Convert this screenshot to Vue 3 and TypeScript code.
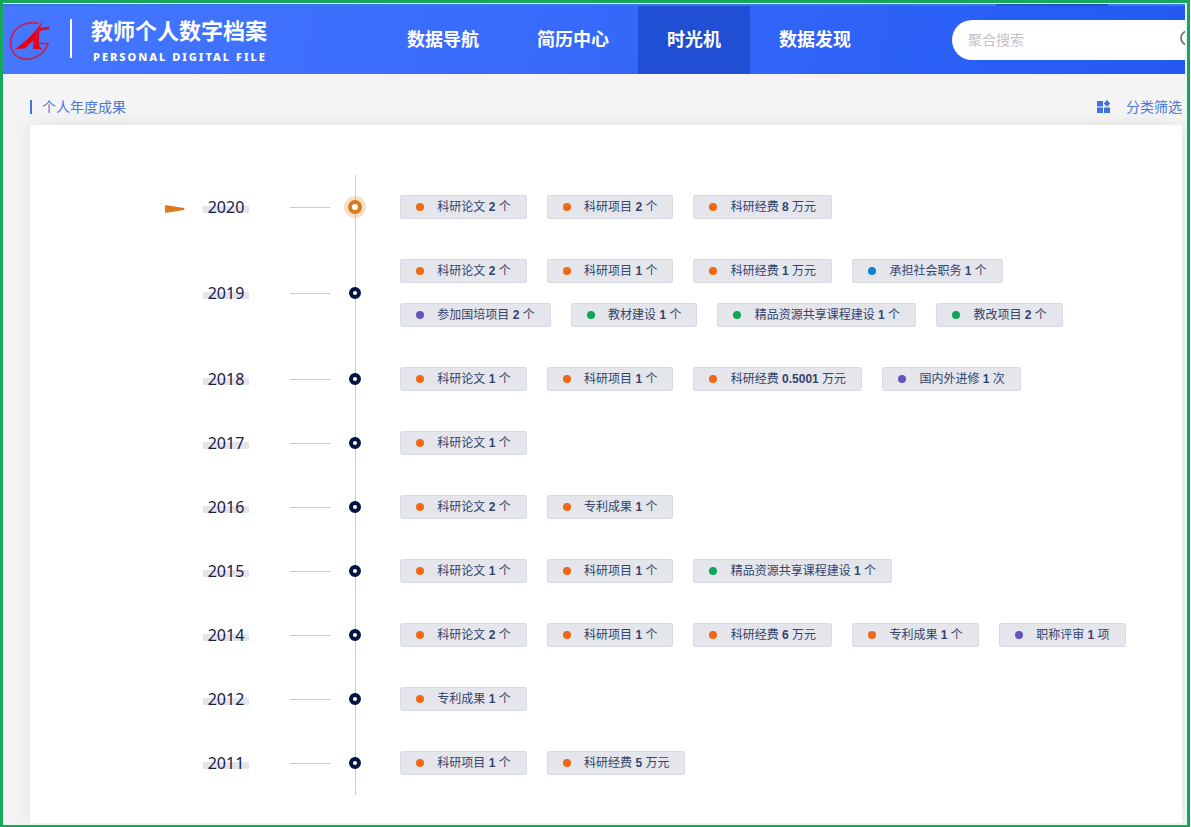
<script setup lang="ts">
import { ref } from 'vue'

type Kind = 'research' | 'social' | 'training' | 'teaching'

interface Tag {
  kind: Kind
  label: string
  value: string
  unit: string
}

interface YearRow {
  year: number
  tags: Tag[]
}

const tag = (kind: Kind, label: string, value: string, unit = '个'): Tag => ({ kind, label, value, unit })

const navItems = ['数据导航', '简历中心', '时光机', '数据发现']
const active = ref('时光机')
const keyword = ref('')

const rows: YearRow[] = [
  {
    year: 2020,
    tags: [
      tag('research', '科研论文', '2'),
      tag('research', '科研项目', '2'),
      tag('research', '科研经费', '8', '万元'),
    ],
  },
  {
    year: 2019,
    tags: [
      tag('research', '科研论文', '2'),
      tag('research', '科研项目', '1'),
      tag('research', '科研经费', '1', '万元'),
      tag('social', '承担社会职务', '1'),
      tag('training', '参加国培项目', '2'),
      tag('teaching', '教材建设', '1'),
      tag('teaching', '精品资源共享课程建设', '1'),
      tag('teaching', '教改项目', '2'),
    ],
  },
  {
    year: 2018,
    tags: [
      tag('research', '科研论文', '1'),
      tag('research', '科研项目', '1'),
      tag('research', '科研经费', '0.5001', '万元'),
      tag('training', '国内外进修', '1', '次'),
    ],
  },
  { year: 2017, tags: [tag('research', '科研论文', '1')] },
  { year: 2016, tags: [tag('research', '科研论文', '2'), tag('research', '专利成果', '1')] },
  {
    year: 2015,
    tags: [
      tag('research', '科研论文', '1'),
      tag('research', '科研项目', '1'),
      tag('teaching', '精品资源共享课程建设', '1'),
    ],
  },
  {
    year: 2014,
    tags: [
      tag('research', '科研论文', '2'),
      tag('research', '科研项目', '1'),
      tag('research', '科研经费', '6', '万元'),
      tag('research', '专利成果', '1'),
      tag('training', '职称评审', '1', '项'),
    ],
  },
  { year: 2012, tags: [tag('research', '专利成果', '1')] },
  { year: 2011, tags: [tag('research', '科研项目', '1'), tag('research', '科研经费', '5', '万元')] },
]

const selectedYear = ref(2020)
</script>

<template>
  <div class="frame">
    <div class="strip"><span class="strip-mark"></span></div>
    <header class="header">
      <svg class="logo" viewBox="0 0 42 42" aria-hidden="true">
        <path
          d="M30 4.500C20 1.500 9 6 4 14.500C-1 24 2 34 10 38.500C21 43.500 35 37 39 24.500H29.500L28.500 27"
          fill="none" stroke="#c4204f" stroke-width="1.700"
        />
        <path d="M34.500 0.500C31 6 30.500 9 30 20L29.500 26L33 30H24L24.500 21L16 29.500L6 30C13 25 25 16 34.500 0.500Z" fill="#e60012" />
        <path d="M30 9L41 7.500L39.500 10.500L30 12Z" fill="#d30f2c" />
        <path d="M33 4.500L28 13.500L26 27" fill="none" stroke="#b82a63" stroke-width="1" />
      </svg>
      <span class="divider"></span>
      <div class="brand">
        <h1>教师个人数字档案</h1>
        <p>PERSONAL DIGITAL FILE</p>
      </div>
      <nav class="nav">
        <a
          v-for="item in navItems"
          :key="item"
          href="#"
          :class="{ active: item === active }"
          @click.prevent="active = item"
        >{{ item }}</a>
      </nav>
      <form class="search" role="search" @submit.prevent>
        <input v-model="keyword" type="text" placeholder="聚合搜索" aria-label="聚合搜索" />
        <button type="submit" aria-label="搜索">
          <svg viewBox="0 0 20 20" aria-hidden="true">
            <circle cx="8" cy="8" r="7" fill="none" stroke="#666" stroke-width="1.600" />
            <path d="M13 13L18 18" stroke="#666" stroke-width="1.600" />
          </svg>
        </button>
      </form>
    </header>

    <main class="main">
      <div class="bar">
        <h2>个人年度成果</h2>
        <button class="filter" type="button">
          <svg viewBox="0 0 14 14" aria-hidden="true">
            <path d="M1 1h6v5.500H1zM1 7.500h6v5.500H1zM8 7.500h6v5.500H8zM11 0l3.300 3.400L11 6.800L7.700 3.400z" fill="#3f74e0" />
          </svg>
          <span>分类筛选</span>
        </button>
      </div>

      <section class="card">
        <ol class="timeline">
          <li v-for="row in rows" :key="row.year" class="row" :class="{ current: row.year === selectedYear }">
            <div class="pointer">
              <svg v-if="row.year === selectedYear" viewBox="0 0 20 8" aria-hidden="true">
                <path d="M0 0L19 3Q20 4 19 5L0 8Z" fill="#dc7a1c" />
              </svg>
            </div>
            <button type="button" class="year" @click="selectedYear = row.year">{{ row.year }}</button>
            <span class="dash"></span>
            <span class="node"><i></i></span>
            <ul class="tags">
              <li v-for="(t, i) in row.tags" :key="i" class="tag">
                <i class="dot" :class="t.kind"></i> {{ t.label }} <strong>{{ t.value }}</strong> {{ t.unit }}
              </li>
            </ul>
          </li>
        </ol>
      </section>
    </main>
  </div>
</template>

<style>
body {
  margin: 0;
}
</style>

<style scoped>
* {
  box-sizing: border-box;
}

.frame {
  display: flex;
  flex-direction: column;
  min-height: 100vh;
  margin-right: 1px;
  border: 3px solid #17a65c;
  border-bottom-width: 2px;
  background: #e2fbf0;
  padding: 1px 2px 2px 0;
  overflow: hidden;
  font-family: "Liberation Sans", "Noto Sans CJK SC", sans-serif;
}

h1, h2, p, ol, ul {
  margin: 0;
  padding: 0;
  list-style: none;
}

button, input {
  border: 0;
  padding: 0;
  background: none;
  font-family: inherit;
}

.strip {
  display: flex;
  justify-content: flex-end;
  height: 2px;
  padding-right: 77px;
  background: #3d78df;
}

.strip-mark {
  width: 112px;
  background: #2453b8;
}

.header {
  display: flex;
  align-items: center;
  height: 68px;
  overflow: hidden;
  background: linear-gradient(100deg, #4577ff 0%, #3669fa 50%, #245af3 100%);
  color: #fff;
}

.logo {
  flex: none;
  width: 42px;
  height: 42px;
  margin-left: 6px;
}

.divider {
  flex: none;
  width: 2px;
  height: 39px;
  margin: 0 19px 4px 19px;
  background: #fff;
}

.brand {
  flex: none;
  width: 287px;
}

.brand h1 {
  padding-top: 2px;
  font-size: 22px;
  line-height: 30px;
  font-weight: 700;
}

.brand p {
  padding: 2px 0 0 2px;
  font-family: "Noto Sans", sans-serif;
  font-size: 11px;
  line-height: 16px;
  font-weight: 800;
  letter-spacing: 2px;
}

.nav {
  display: flex;
  flex: none;
  align-self: stretch;
}

.nav a {
  padding: 0 29px;
  color: #fff;
  font-size: 18px;
  font-weight: 700;
  line-height: 68px;
  text-decoration: none;
}

.nav a.active {
  background: #214fd3;
}

.search {
  display: flex;
  flex: none;
  align-items: center;
  width: 268px;
  height: 40px;
  margin-left: auto;
  margin-right: -35px;
  padding: 0 20px 0 16px;
  border-radius: 20px;
  background: #fff;
}

.search input {
  flex: 1;
  min-width: 0;
  outline: 0;
  font-size: 14px;
  line-height: 20px;
}

.search input::placeholder {
  color: #bfc3cb;
}

.search button {
  width: 20px;
  height: 20px;
}

.search svg {
  display: block;
  width: 20px;
  height: 20px;
}

.main {
  display: flex;
  flex: 1;
  flex-direction: column;
  padding: 23px 3px 0 27px;
  overflow: hidden;
  background: #f4f4f4;
}

.bar {
  display: flex;
  align-items: center;
  justify-content: space-between;
  height: 20px;
  margin-bottom: 8px;
  color: #4c78d6;
}

.bar h2 {
  display: flex;
  align-items: center;
  gap: 10px;
  font-size: 14px;
  line-height: 20px;
  font-weight: 400;
}

.bar h2::before {
  content: "";
  width: 2px;
  height: 14px;
  background: #3f74e0;
}

.filter {
  display: flex;
  align-items: center;
  gap: 16px;
  color: inherit;
  font-size: 14px;
  line-height: 20px;
}

.filter svg {
  width: 14px;
  height: 14px;
}

.card {
  flex: 1;
  padding: 50px 20px 28px 135px;
  border-radius: 3px 3px 0 0;
  background: #fff;
  box-shadow: 0 0 20px rgba(0, 0, 0, 0.08);
}

.timeline {
  padding: 20px 0;
  background: linear-gradient(#ccc, #ccc) 190px 0 / 1px 100% no-repeat;
}

.row {
  display: flex;
  align-items: center;
  margin-bottom: 40px;
}

.row:last-child {
  margin-bottom: 0;
}

.pointer {
  flex: none;
  width: 38px;
}

.pointer svg {
  display: block;
  width: 20px;
  height: 8px;
  margin-top: 4px;
}

.year {
  flex: none;
  width: 46px;
  background: linear-gradient(#e4e5ec, #e4e5ec) 0 11px / 100% 7px no-repeat;
  color: #14204a;
  font-family: "Noto Sans", sans-serif;
  font-size: 16px;
  line-height: 24px;
}

.dash {
  flex: none;
  width: 40px;
  height: 1px;
  margin: 0 14px 0 41px;
  background: #ccc;
}

.node {
  display: flex;
  flex: none;
  align-items: center;
  justify-content: center;
  width: 22px;
  height: 22px;
  margin-right: 34px;
  border-radius: 50%;
}

.node i {
  width: 12px;
  height: 12px;
  border: 4px solid #041446;
  border-radius: 50%;
  background: #fff;
}

.current .node {
  background: rgba(233, 140, 50, 0.28);
}

.current .node i {
  width: 14px;
  height: 14px;
  border-color: #d97b20;
}

.tags {
  display: flex;
  flex-wrap: wrap;
  gap: 20px;
  min-width: 0;
}

.tag {
  height: 24px;
  padding: 0 15px;
  border: 1px solid #d8dbe2;
  border-radius: 2px;
  background: #e4e6ec;
  color: #34436c;
  font-size: 12px;
  line-height: 22px;
  white-space: nowrap;
}

.dot {
  display: inline-block;
  width: 8px;
  height: 8px;
  margin-right: 10px;
  border-radius: 50%;
}

.research { background: #f06a12; }
.social { background: #0f82d2; }
.training { background: #6554c0; }
.teaching { background: #0ea654; }
</style>
